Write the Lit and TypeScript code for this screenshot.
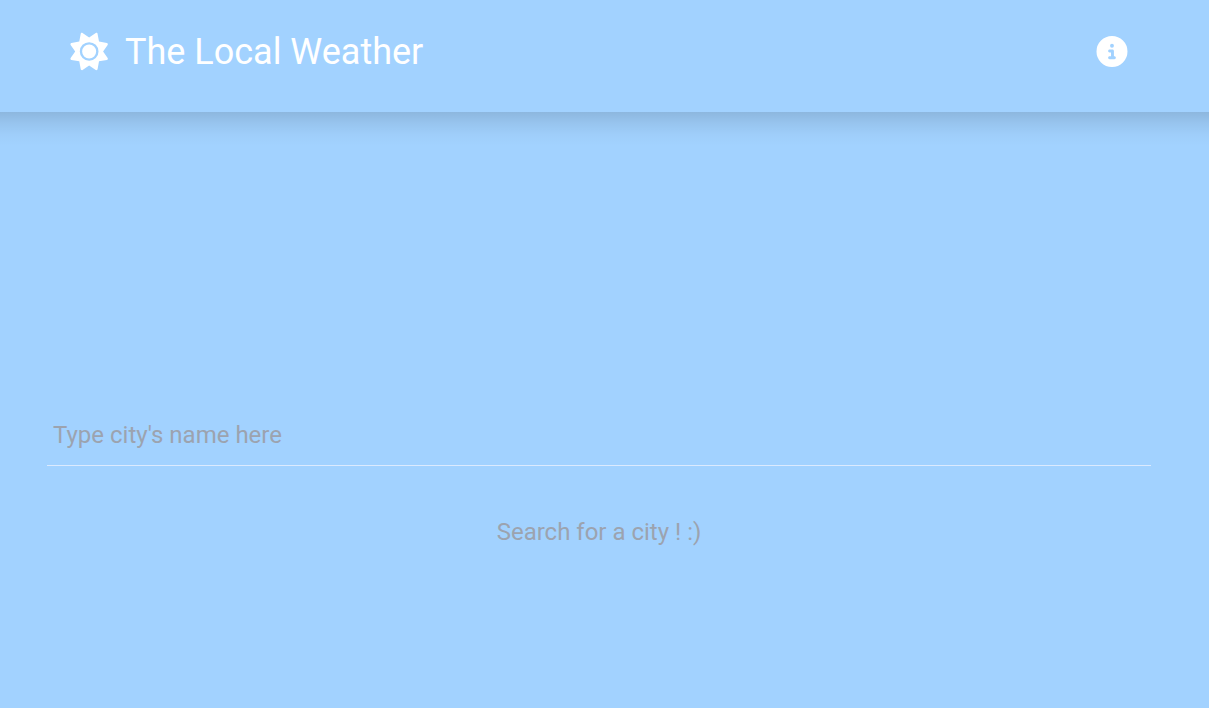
import { LitElement, html, css } from "lit";
import { customElement, state } from "lit/decorators.js";

@customElement("app-root")
export class AppRoot extends LitElement {
  static styles = css`
    :host {
      display: flex;
      flex-direction: column;
      min-height: 100vh;
      background: #a2d2ff;
      color: #fff;
      font-family: Roboto, sans-serif;
    }
    .header {
      display: flex;
      align-items: flex-start;
      justify-content: space-between;
      box-sizing: border-box;
      min-height: 112px;
      padding: 24px 82px 32px 70px;
    }
    .brand {
      display: flex;
      align-items: center;
      gap: 17px;
      color: inherit;
      text-decoration: none;
    }
    .sun {
      width: 38px;
      height: 38px;
      fill: currentColor;
      overflow: visible;
    }
    .title {
      margin: 0;
      font-size: 36px;
      line-height: 56px;
      font-weight: 400;
    }
    .about {
      display: flex;
      align-items: center;
      height: 55px;
      padding: 0;
      border: 0;
      background: none;
      color: inherit;
      cursor: pointer;
    }
    .info {
      width: 31px;
      height: 31px;
      fill: currentColor;
      overflow: visible;
    }
    .main {
      display: flex;
      flex: 1;
      flex-direction: column;
      justify-content: center;
      gap: 48px;
      padding: 134px 58px 0 47px;
      background: linear-gradient(
          rgba(0, 0, 0, 0.13),
          rgba(0, 0, 0, 0.065) 11px,
          rgba(0, 0, 0, 0.02) 23px,
          transparent 34px
        )
        no-repeat;
    }
    .city {
      display: block;
      box-sizing: border-box;
      width: 100%;
      height: 62px;
      padding: 0 6px;
      border: 0;
      border-bottom: 1px solid #dbeafe;
      border-radius: 0;
      outline: 0;
      background: transparent;
      color: #fff;
      font: 24px/32px Roboto, sans-serif;
    }
    .city::placeholder {
      color: #9ca3af;
      opacity: 1;
    }
    .hint {
      margin: 0;
      color: #9ca3af;
      font-size: 24px;
      line-height: 36px;
      text-align: center;
    }
  `;

  @state() private city = "";

  private onInput(event: Event) {
    this.city = (event.target as HTMLInputElement).value;
  }

  render() {
    return html`
      <header class="header">
        <a class="brand" href="#">
          <svg class="sun" viewBox="-6 3 520 520" aria-hidden="true">
            <path
              d="M361.5 1.2c5 2.1 8.6 6.6 9.6 11.9L391 121l107.9 19.8c5.3 1 9.8 4.6 11.9 9.6s1.5 10.7-1.6 15.2L446.9 256l62.3 90.3c3.1 4.5 3.7 10.2 1.6 15.2s-6.6 8.6-11.9 9.6L391 391 371.1 498.9c-1 5.3-4.6 9.8-9.6 11.9s-10.7 1.5-15.2-1.6L256 446.9l-90.3 62.3c-4.5 3.1-10.2 3.7-15.2 1.6s-8.6-6.6-9.6-11.9L121 391 13.1 371.1c-5.3-1-9.8-4.6-11.9-9.6s-1.5-10.7 1.6-15.2L65.1 256 2.8 165.7c-3.1-4.5-3.7-10.2-1.6-15.2s6.6-8.6 11.9-9.6L121 121 140.9 13.1c1-5.3 4.6-9.8 9.6-11.9s10.7-1.5 15.2 1.6L256 65.1 346.3 2.8c4.5-3.1 10.2-3.7 15.2-1.6zM160 256a96 96 0 1 1 192 0 96 96 0 1 1 -192 0zm224 0a128 128 0 1 0 -256 0 128 128 0 1 0 256 0z"
            />
          </svg>
          <h1 class="title">The Local Weather</h1>
        </a>
        <button class="about" type="button" aria-label="About">
          <svg class="info" viewBox="-8 0 512 512" aria-hidden="true">
            <path
              d="M256 512A256 256 0 1 0 256 0a256 256 0 1 0 0 512zM216 336h24V272H216c-13.3 0-24-10.7-24-24s10.7-24 24-24h48c13.3 0 24 10.7 24 24v88h8c13.3 0 24 10.7 24 24s-10.7 24-24 24H216c-13.3 0-24-10.7-24-24s10.7-24 24-24zm40-208a32 32 0 1 1 0 64 32 32 0 1 1 0-64z"
            />
          </svg>
        </button>
      </header>
      <main class="main">
        <input
          class="city"
          type="text"
          aria-label="City"
          placeholder="Type city's name here"
          .value=${this.city}
          @input=${this.onInput}
        />
        <p class="hint">Search for a city ! :)</p>
      </main>
    `;
  }
}
